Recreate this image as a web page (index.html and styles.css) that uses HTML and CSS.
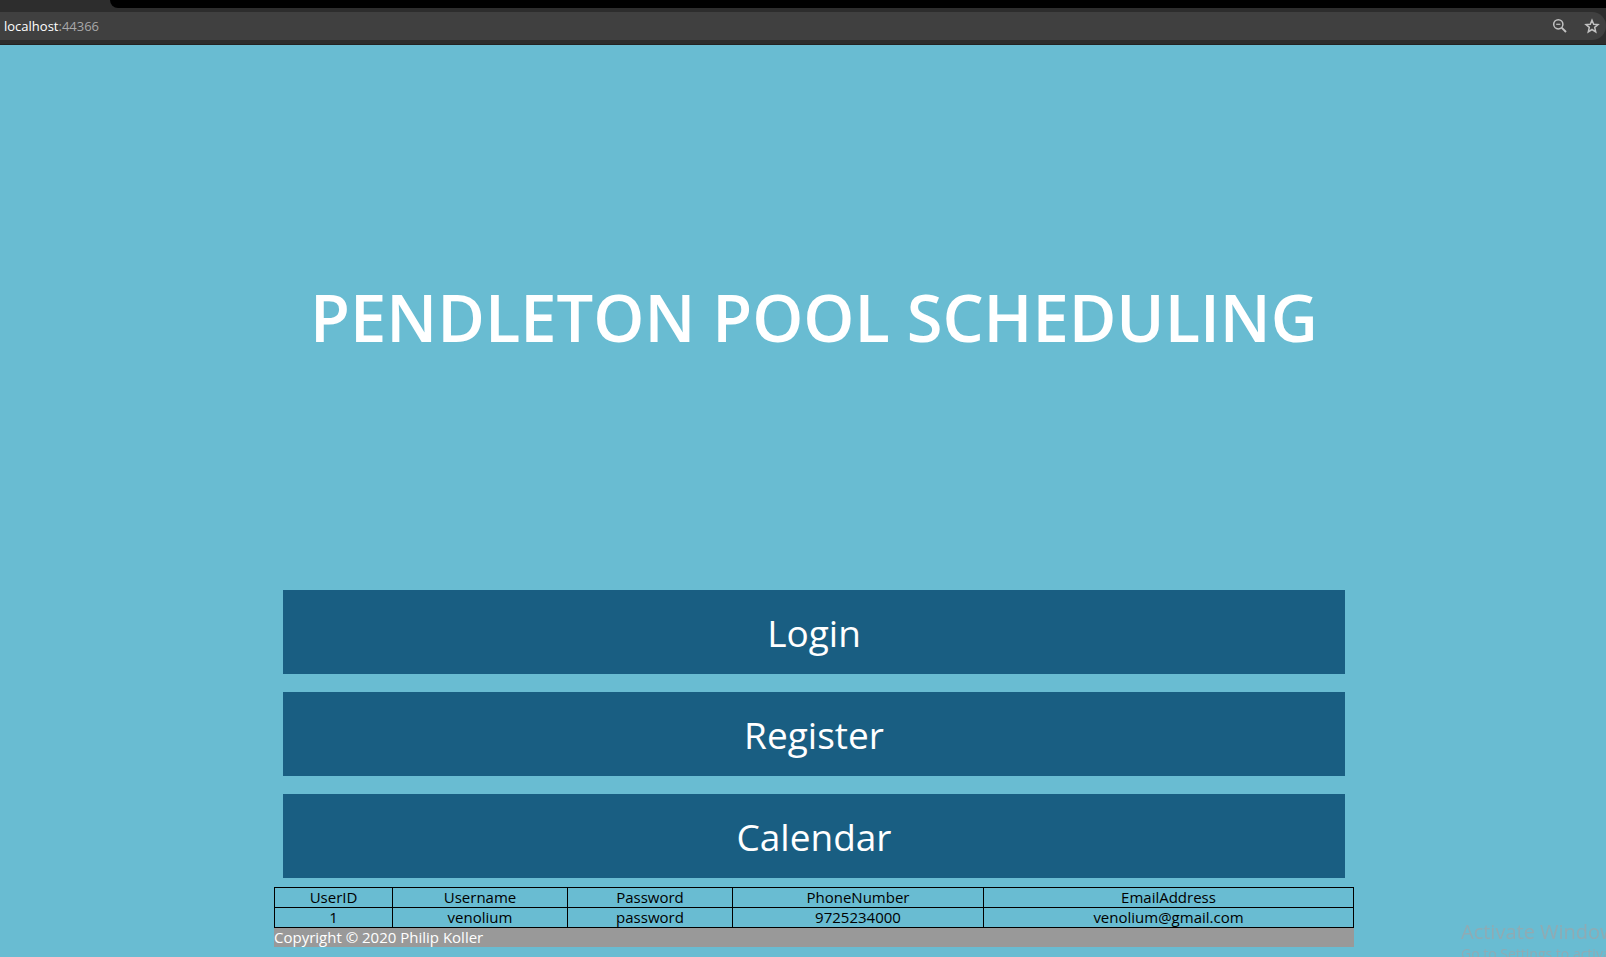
FILE: index.html
```html
<!DOCTYPE html>
<html lang="en">
<head>
<meta charset="utf-8">
<meta name="viewport" content="width=device-width, initial-scale=1">
<title>Pendleton Pool Scheduling</title>
<link rel="stylesheet" href="styles.css">
</head>
<body>
<header class="browser">
  <div class="tabstrip"></div>
  <div class="toolbar">
    <div class="address"><span class="host">localhost</span>:44366</div>
    <button class="tool" type="button" aria-label="Zoom">
      <svg width="16" height="16" viewBox="0 0 16 16" fill="none" stroke="#c2c2c2" stroke-width="1.5"><circle cx="6.3" cy="6.3" r="4.6"/><path d="M9.6 9.6 14 14" stroke-width="1.9"/><path d="M4.2 6.3h4.2" stroke-width="1.2"/></svg>
    </button>
    <button class="tool" type="button" aria-label="Bookmark this page">
      <svg width="16" height="16" viewBox="0 0 16 16" fill="none" stroke="#c2c2c2" stroke-width="1.5" stroke-linejoin="miter"><path d="M8 2.2 9.7 6.2 14 6.6 10.7 9.4 11.7 13.8 8 11.5 4.3 13.8 5.3 9.4 2 6.6 6.3 6.2Z"/></svg>
    </button>
  </div>
</header>
<div class="page">
  <main class="content">
    <div class="hero"><h1 class="title">PENDLETON POOL SCHEDULING</h1></div>
    <nav class="menu">
      <button class="menu-button" type="button">Login</button>
      <button class="menu-button" type="button">Register</button>
      <button class="menu-button" type="button">Calendar</button>
    </nav>
    <table class="users">
      <colgroup><col class="col-id"><col class="col-name"><col class="col-password"><col class="col-phone"><col></colgroup>
      <thead>
        <tr><th>UserID</th><th>Username</th><th>Password</th><th>PhoneNumber</th><th>EmailAddress</th></tr>
      </thead>
      <tbody>
        <tr><td>1</td><td>venolium</td><td>password</td><td>9725234000</td><td>venolium@gmail.com</td></tr>
      </tbody>
    </table>
    <footer class="footer">Copyright © 2020 Philip Koller</footer>
  </main>
</div>
<aside class="watermark">
  <p class="watermark-title">Activate Windows</p>
  <p class="watermark-text">Go to Settings to activate Windows.</p>
</aside>
</body>
</html>
```

FILE: styles.css
```css
* {
  box-sizing: border-box;
}

body {
  margin: 0;
  min-height: 100vh;
  display: flex;
  flex-direction: column;
  overflow: hidden;
  background: #69bcd2;
  color: #000;
  font-family: "Open Sans", "Noto Sans", sans-serif;
  font-size: 15px;
}

.browser {
  background: #2d2d2d;
  border-bottom: 1px solid #222;
}

.tabstrip {
  height: 8px;
  margin-left: 110px;
  background: #000;
  border-bottom-left-radius: 8px;
}

.toolbar {
  display: flex;
  align-items: center;
  gap: 16px;
  height: 28px;
  margin: 4px 0;
  padding: 0 6px 0 4px;
  background: #404040;
  border-radius: 0 14px 14px 0;
}

.address {
  flex: 1;
  color: #a8a8a8;
  font-size: 13px;
}

.host {
  color: #fff;
  font-weight: 500;
}

.tool {
  display: flex;
  padding: 0;
  border: 0;
  background: none;
}

.page {
  flex: 1;
  display: flex;
  padding-left: 22px;
}

.content {
  display: flex;
  flex-direction: column;
  width: 100%;
  max-width: 1080px;
  margin: 0 auto 10px;
}

.hero {
  flex: 1;
  display: flex;
  align-items: center;
  justify-content: center;
  padding-top: 8px;
}

.title {
  margin: 0;
  color: #fff;
  font-size: 65px;
  font-weight: 600;
  line-height: 90px;
  text-align: center;
}

.menu {
  display: flex;
  flex-direction: column;
  gap: 18px;
  padding: 9px;
}

.menu-button {
  height: 84px;
  padding: 0;
  border: 0;
  background: #195e82;
  color: #fff;
  font-family: inherit;
  font-size: 37px;
}

.users {
  width: 100%;
  table-layout: fixed;
  border-collapse: collapse;
  text-align: center;
  line-height: 19px;
}

.users th,
.users td {
  padding: 0;
  border: 1px solid #000;
  font-weight: 400;
}

.col-id { width: 118px; }
.col-name { width: 175px; }
.col-password { width: 165px; }
.col-phone { width: 251px; }

.footer {
  background: #999;
  color: #fff;
  line-height: 19px;
}

.watermark {
  position: fixed;
  left: calc(100% - 145px);
  top: calc(100% - 38px);
  color: #8fabb4;
  white-space: nowrap;
}

.watermark p {
  margin: 0;
}

.watermark-title {
  font-size: 20px;
  line-height: 26px;
}

.watermark-text {
  font-size: 14px;
  line-height: 18px;
}
```
